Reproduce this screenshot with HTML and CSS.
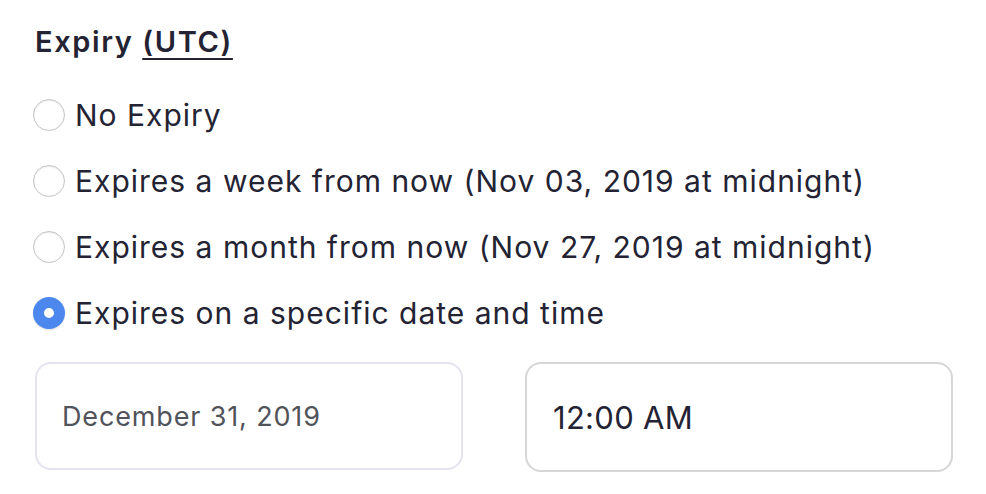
FILE: index.html
```html
<!DOCTYPE html>
<html lang="en">
<head>
  <meta charset="UTF-8">
  <title>Expiry</title>
  <link rel="stylesheet" href="styles.css">
</head>
<body>
  <div class="expiry">
    <h2 class="title">Expiry <span class="utc">(UTC)</span></h2>

    <label class="option">
      <span class="radio"></span>
      <span>No Expiry</span>
    </label>
    <label class="option">
      <span class="radio"></span>
      <span>Expires a week from now (Nov 03, 2019 at midnight)</span>
    </label>
    <label class="option">
      <span class="radio"></span>
      <span>Expires a month from now (Nov 27, 2019 at midnight)</span>
    </label>
    <label class="option">
      <span class="radio checked"></span>
      <span>Expires on a specific date and time</span>
    </label>

    <div class="pickers">
      <div class="field date">December 31, 2019</div>
      <div class="field time">12:00 AM</div>
    </div>
  </div>
</body>
</html>
```

FILE: styles.css
```css
body {
  margin: 0;
  background-color: #fff;
  font-family: Inter, 'Noto Sans', sans-serif;
  color: #232333;
}

.expiry {
  padding: 22px 33px 0 33px;
}

.title {
  margin: 0 0 36px 2px;
  font-size: 29px;
  font-weight: 600;
  letter-spacing: 1.6px;
  line-height: 40px;
}

.utc {
  text-decoration: underline;
  text-underline-offset: 6px;
  text-decoration-thickness: 2px;
}

.option {
  display: flex;
  align-items: center;
  gap: 10px;
  height: 66px;
  font-size: 30px;
  letter-spacing: 1px;
  margin-top: -16px;
  margin-bottom: 16px;
}

.radio {
  width: 32px;
  height: 32px;
  border: 1px solid #c4c4c4;
  border-radius: 50%;
  box-shadow: inset 0 1px 2px rgba(0,0,0,0.08);
  background: #fff;
  flex-shrink: 0;
  box-sizing: border-box;
}

.radio.checked {
  border: 11px solid #4b87ec;
  box-shadow: 0 1px 2px rgba(0,0,0,0.15);
}

.pickers {
  display: flex;
  gap: 62px;
  margin-top: 8px;
}

.field {
  width: 428px;
  height: 108px;
  box-sizing: border-box;
  border-radius: 16px;
  display: flex;
  align-items: center;
}

.date {
  border: 2px solid #e4e4ef;
  color: #51535b;
  font-size: 27px;
  letter-spacing: 0.85px;
  padding-left: 25px;
  margin-left: 2px;
}

.time {
  border: 2px solid #d6d6d6;
  color: #232333;
  font-size: 31px;
  letter-spacing: 0.3px;
  padding-left: 26px;
  height: 110px;
}
```
